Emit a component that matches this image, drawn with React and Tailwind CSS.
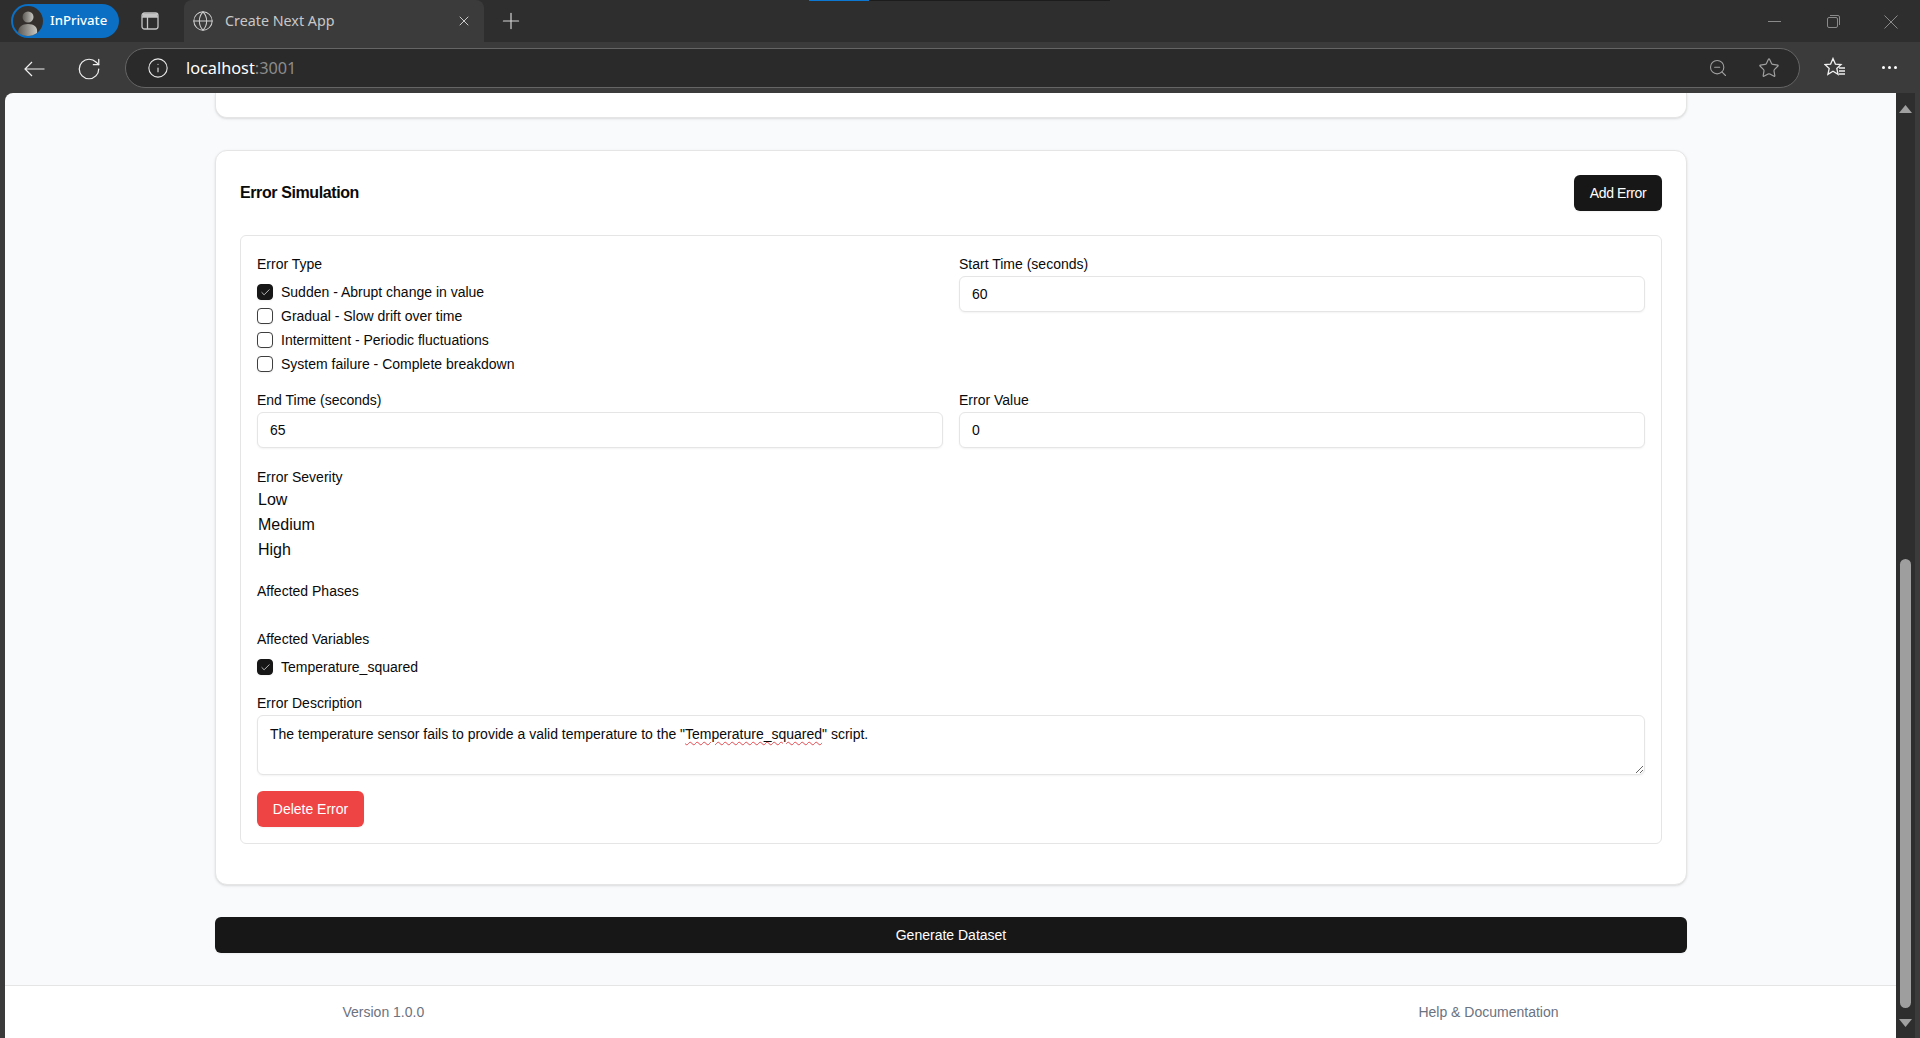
import { Check, Globe, Info, Plus, RotateCw, Star, X, ZoomOut } from "lucide-react";

const errorTypes = [
  { label: "Sudden - Abrupt change in value", checked: true },
  { label: "Gradual - Slow drift over time", checked: false },
  { label: "Intermittent - Periodic fluctuations", checked: false },
  { label: "System failure - Complete breakdown", checked: false },
];

const severities = ["Low", "Medium", "High"];

const labelClass = "block h-5 text-sm leading-5 text-[#0a0a0a]";
const inputClass =
  "block h-9 w-full rounded-md border border-[#e5e5e5] bg-white px-3 text-sm text-[#0a0a0a] shadow-xs outline-none";

function CheckRow({ label, checked }) {
  return (
    <div className="flex h-5 items-center gap-2">
      <span
        className={`flex h-4 w-4 items-center justify-center rounded-[4px] border shadow-xs ${
          checked ? "border-[#171717] bg-[#171717]" : "border-[#3f3f3f] bg-white"
        }`}
      >
        {checked ? <Check size={11} strokeWidth={1.5} className="text-white" /> : null}
      </span>
      <span className="text-sm leading-5 text-[#0a0a0a]">{label}</span>
    </div>
  );
}

function TabStrip() {
  return (
    <div className="relative flex h-[42px] items-start bg-[#2e2e2e] text-[#d6d6d6]">
      <div className="absolute left-[809px] top-0 h-px w-[60px] bg-[#0c78d4]" />
      <div className="absolute left-[869px] top-0 h-px w-[241px] bg-[#1c1c1c]" />

      <div className="ml-[11px] mt-1 flex h-[34px] w-[108px] items-center rounded-full bg-[#0b6fc3] pl-[2px]">
        <svg width="30" height="30" viewBox="0 0 30 30" className="shrink-0">
          <defs>
            <linearGradient id="avatarFill" x1="0" x2="1" y1="0" y2="0">
              <stop offset="0" stopColor="#5d5a55" />
              <stop offset="1" stopColor="#c9c7c2" />
            </linearGradient>
          </defs>
          <circle cx="15" cy="15" r="15" fill="#33302d" />
          <circle cx="15" cy="11" r="5.5" fill="url(#avatarFill)" />
          <path d="M5 27c0-6 4-9 10-9s10 3 9 9c-3 2-6 3-9 3s-7-1-10-3z" fill="url(#avatarFill)" />
        </svg>
        <span className="ml-[7px] font-['Noto_Sans',sans-serif] text-[13.2px] font-medium text-white">InPrivate</span>
      </div>

      <svg width="18" height="18" viewBox="0 0 18 18" fill="none" stroke="#c4c4c4" strokeWidth="1.3" className="ml-[22px] mt-3 shrink-0">
        <rect x="1" y="1" width="16" height="16" rx="2.5" />
        <path d="M1 5h16M6.5 5v12" />
        <path d="M1.5 1.5h15V5h-15z" fill="#c4c4c4" stroke="none" />
      </svg>

      <div className="ml-[25px] flex h-[42px] w-[300px] items-center rounded-t-lg bg-[#3b3b3b] pl-2">
        <Globe size={22} strokeWidth={1.1} className="shrink-0 text-[#d0d0d0]" />
        <span className="ml-[11px] font-['Noto_Sans',sans-serif] text-[14.3px] text-[#c8c8c8]">Create Next App</span>
        <X size={16} strokeWidth={1.4} className="ml-auto mr-[12px] text-[#d6d6d6]" />
      </div>

      <Plus size={26} strokeWidth={1.1} className="ml-[14px] mt-2 text-[#d6d6d6]" />

      <div className="ml-auto mr-[22px] mt-[15px] flex items-start text-[#8a8a8a]">
        <svg width="13" height="13" viewBox="0 0 13 13" fill="none" stroke="currentColor">
          <path d="M0 6.5h13" />
        </svg>
        <svg width="13" height="13" viewBox="0 0 13 13" fill="none" stroke="currentColor" className="ml-[46px]">
          <rect x="0.5" y="2.5" width="10" height="10" rx="1.5" />
          <path d="M3 0.5h8a1.5 1.5 0 0 1 1.5 1.5v8" />
        </svg>
        <svg width="14" height="14" viewBox="0 0 14 14" fill="none" stroke="currentColor" className="ml-[44px]">
          <path d="M0.5 0.5l13 13M13.5 0.5l-13 13" />
        </svg>
      </div>
    </div>
  );
}

function Toolbar() {
  return (
    <div className="flex h-[51px] items-start bg-[#3b3b3b]">
      <svg width="21" height="16" viewBox="0 0 21 16" fill="none" stroke="#f0f0f0" strokeWidth="1.2" className="ml-6 mt-[19px] shrink-0">
        <path d="M20.5 8H1M8 1L1 8l7 7" />
      </svg>
      <RotateCw size={26} strokeWidth={1.15} className="ml-[31px] mt-[14px] shrink-0 text-[#f0f0f0]" />
      <div className="ml-[23px] mt-[6px] flex h-10 flex-1 items-center rounded-full border border-[#656565] bg-[#2a2a2a] pl-[21px] pr-[19px]">
        <Info size={22} strokeWidth={1.2} className="shrink-0 text-[#e8e8e8]" />
        <span className="ml-[17px] font-['Noto_Sans',sans-serif] text-[16.3px] text-white">
          localhost<span className="text-[#8c8c8c]">:3001</span>
        </span>
        <ZoomOut size={20} strokeWidth={1.3} className="ml-auto text-[#a0a0a0]" />
        <Star size={22} strokeWidth={1.3} className="ml-[30px] text-[#a0a0a0]" />
      </div>
      <svg width="22" height="22" viewBox="0 0 22 22" fill="none" stroke="#f0f0f0" strokeWidth="1.3" className="ml-6 mt-[15px] shrink-0">
        <path d="M9 1.5l2.4 5.6 5.6.5-4.2 3.8 1.3 6-5.1-3.1-5.1 3.1 1.3-6L1 7.6l5.6-.5z" />
        <path d="M15 11h6M15 14h6M15 17h6" />
      </svg>
      <div className="ml-[36px] mt-[24px] flex gap-[3px]">
        <span className="h-[3px] w-[3px] rounded-full bg-white" />
        <span className="h-[3px] w-[3px] rounded-full bg-white" />
        <span className="h-[3px] w-[3px] rounded-full bg-white" />
      </div>
      <div className="w-[23px] shrink-0" />
    </div>
  );
}

function Scrollbar() {
  return (
    <div className="flex w-[19px] shrink-0 flex-col items-center bg-[#2e2e2e]">
      <svg width="13" height="8" viewBox="0 0 13 8" className="mt-[12px] shrink-0">
        <path d="M6.5 0L13 8H0z" fill="#a0a0a0" />
      </svg>
      <div className="mt-[446px] h-[449px] w-[11px] rounded-full bg-[#9e9e9e]" />
      <svg width="13" height="8" viewBox="0 0 13 8" className="mt-[11px] shrink-0">
        <path d="M0 0h13L6.5 8z" fill="#a0a0a0" />
      </svg>
    </div>
  );
}

function ErrorForm() {
  return (
    <div className="mb-4 mt-6 rounded-md border border-[#e5e5e5] px-4 pb-4 pt-[18px]">
      <div className="grid grid-cols-2 gap-x-4 gap-y-4">
        <div>
          <label className={labelClass}>Error Type</label>
          <div className="mt-[8px] flex flex-col gap-1">
            {errorTypes.map((type) => (
              <CheckRow key={type.label} label={type.label} checked={type.checked} />
            ))}
          </div>
        </div>
        <div>
          <label className={labelClass}>Start Time (seconds)</label>
          <input className={`${inputClass} mt-[2px]`} defaultValue="60" />
        </div>
        <div>
          <label className={labelClass}>End Time (seconds)</label>
          <input className={`${inputClass} mt-[2px]`} defaultValue="65" />
        </div>
        <div>
          <label className={labelClass}>Error Value</label>
          <input className={`${inputClass} mt-[2px]`} defaultValue="0" />
        </div>
      </div>

      <div className="mt-[19px]">
        <label className={labelClass}>Error Severity</label>
        <div className="mt-px flex flex-col gap-px pl-px">
          {severities.map((severity) => (
            <span key={severity} className="text-base leading-6 text-[#0a0a0a]">
              {severity}
            </span>
          ))}
        </div>
      </div>

      <div className="mt-[19px]">
        <label className={labelClass}>Affected Phases</label>
      </div>

      <div className="mt-7">
        <label className={labelClass}>Affected Variables</label>
        <div className="mt-[8px]">
          <CheckRow label="Temperature_squared" checked />
        </div>
      </div>

      <div className="mt-4">
        <label className={labelClass}>Error Description</label>
        <div className="mt-[2px] h-[60px] resize-y overflow-auto rounded-md border border-[#e5e5e5] bg-white px-3 py-2 text-sm leading-5 text-[#0a0a0a] shadow-xs">
          The temperature sensor fails to provide a valid temperature to the "
          <span className="underline decoration-[#e5484d] decoration-wavy decoration-1 underline-offset-2">Temperature_squared</span>
          " script.
        </div>
      </div>

      <button className="mt-4 flex h-9 w-[107px] items-center justify-center rounded-md bg-[#ef4444] text-sm text-white shadow-xs">
        Delete Error
      </button>
    </div>
  );
}

export default function App() {
  return (
    <div className="flex h-screen flex-col overflow-hidden bg-[#3b3b3b] font-['Liberation_Sans',Arial,sans-serif]">
      <TabStrip />
      <Toolbar />
      <div className="flex min-h-0 flex-1">
        <div className="ml-[5px] flex min-w-0 flex-1 flex-col overflow-hidden rounded-tl-lg bg-[#f9fafb]">
          <main className="flex flex-1 flex-col pl-[210px] pr-[209px]">
            <div className="h-[25px] rounded-b-xl border-x border-b border-[#e5e5e5] bg-white shadow-sm" />

            <section className="mt-8 rounded-xl border border-[#e5e5e5] bg-white p-6 shadow-sm">
              <div className="flex items-center justify-between">
                <h2 className="text-base font-semibold tracking-[-0.4px] text-[#0a0a0a]">Error Simulation</h2>
                <button className="h-9 w-[88px] rounded-md bg-[#171717] text-sm tracking-[-0.4px] text-white shadow-xs">
                  Add Error
                </button>
              </div>
              <ErrorForm />
            </section>

            <button className="mt-8 h-9 w-full shrink-0 rounded-md bg-[#171717] text-sm text-white shadow-xs">
              Generate Dataset
            </button>
          </main>

          <footer className="h-[53px] shrink-0 border-t border-[#e5e5e5] bg-white">
            <div className="mx-auto flex h-full max-w-[1216px] items-center justify-between text-sm text-[#6b7280]">
              <span>Version 1.0.0</span>
              <span>Help &amp; Documentation</span>
            </div>
          </footer>
        </div>
        <Scrollbar />
        <div className="w-[5px] shrink-0" />
      </div>
    </div>
  );
}
